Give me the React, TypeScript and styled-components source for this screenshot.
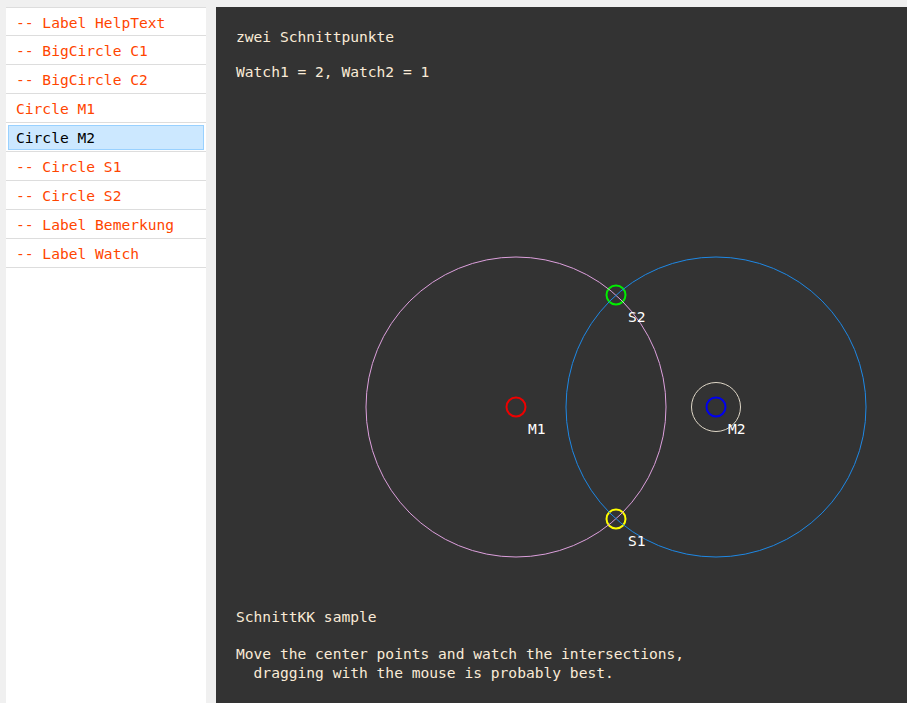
import React from "react";
import styled, { createGlobalStyle } from "styled-components";

const GlobalStyle = createGlobalStyle`
  html, body { margin: 0; padding: 0; background: #f0f0f0; }
  body { font-family: "DejaVu Sans Mono", "Liberation Mono", monospace; }
`;

const Page = styled.div`
  display: flex;
  gap: 10px;
  padding: 7px 0 0 6px;
  height: 703px;
  box-sizing: border-box;
  overflow: hidden;
`;

const Sidebar = styled.ul`
  width: 200px;
  margin: 0;
  padding: 0;
  list-style: none;
  background: #fff;
  border-top: 1px solid #dddddd;
  flex-shrink: 0;
`;

const Row = styled.li`
  height: 28px;
  border-bottom: 1px solid #dddddd;
  box-sizing: border-box;
  display: flex;
  align-items: stretch;
  padding: 2px 2px 1px;
  font-size: 14.6px;
  & + & { height: 29px; }
`;

const RowInner = styled.div<{ $selected?: boolean }>`
  flex: 1;
  display: flex;
  align-items: center;
  padding-left: 7px;
  box-sizing: border-box;
  border: 1px solid ${(p) => (p.$selected ? "#99d1ff" : "transparent")};
  background: ${(p) => (p.$selected ? "#cce8ff" : "transparent")};
  color: ${(p) => (p.$selected ? "#000" : "#ff4500")};
  white-space: pre;
`;

const Stage = styled.div`
  position: relative;
  flex: 1;
  background: #333333;
  color: #faebd7;
  font-size: 14.6px;
  line-height: 19px;
  display: flex;
  flex-direction: column;
  justify-content: space-between;
  padding: 20px 20px 21px 20px;
  box-sizing: border-box;
`;

const Canvas = styled.svg`
  position: absolute;
  left: 0;
  top: 0;
  width: 100%;
  height: 100%;
  pointer-events: none;
`;

const TextBlock = styled.div<{ $gap: number }>`
  position: relative;
  display: flex;
  flex-direction: column;
  gap: ${(p) => p.$gap}px;
`;

const Line = styled.div`
  white-space: pre;
`;

const items = [
  { text: "-- Label HelpText" },
  { text: "-- BigCircle C1" },
  { text: "-- BigCircle C2" },
  { text: "Circle M1" },
  { text: "Circle M2", selected: true },
  { text: "-- Circle S1" },
  { text: "-- Circle S2" },
  { text: "-- Label Bemerkung" },
  { text: "-- Label Watch" },
];

const labelStyle = {
  fill: "#ffffff",
  fontFamily: '"DejaVu Sans Mono", "Liberation Mono", monospace',
  fontSize: "14.6px",
};

export default function App() {
  return (
    <>
      <GlobalStyle />
      <Page>
        <Sidebar>
          {items.map((it) => (
            <Row key={it.text}>
              <RowInner $selected={it.selected}>{it.text}</RowInner>
            </Row>
          ))}
        </Sidebar>
        <Stage>
          <Canvas>
            <circle cx={300} cy={400} r={9.5} fill="none" stroke="#ee0000" strokeWidth={2} />
            <circle cx={500} cy={400} r={9.5} fill="none" stroke="#0000ee" strokeWidth={2} />
            <circle cx={400} cy={288} r={9.5} fill="none" stroke="#00ee00" strokeWidth={2} />
            <circle cx={400} cy={512} r={9.5} fill="none" stroke="#ffff00" strokeWidth={2} />
            <circle cx={300} cy={400} r={150} fill="none" stroke="#dda0dd" strokeWidth={1} />
            <circle cx={500} cy={400} r={150} fill="none" stroke="#1e88e5" strokeWidth={1} />
            <circle cx={500} cy={400} r={24.5} fill="none" stroke="#e0d8c8" strokeWidth={1} />
            <text x={412} y={315} style={labelStyle}>S2</text>
            <text x={312} y={427} style={labelStyle}>M1</text>
            <text x={512} y={427} style={labelStyle}>M2</text>
            <text x={412} y={539} style={labelStyle}>S1</text>
          </Canvas>
          <TextBlock $gap={16}>
            <Line>zwei Schnittpunkte</Line>
            <Line>Watch1 = 2, Watch2 = 1</Line>
          </TextBlock>
          <TextBlock $gap={18}>
            <Line>SchnittKK sample</Line>
            <div>
              <Line>Move the center points and watch the intersections,</Line>
              <Line>  dragging with the mouse is probably best.</Line>
            </div>
          </TextBlock>
        </Stage>
      </Page>
    </>
  );
}
